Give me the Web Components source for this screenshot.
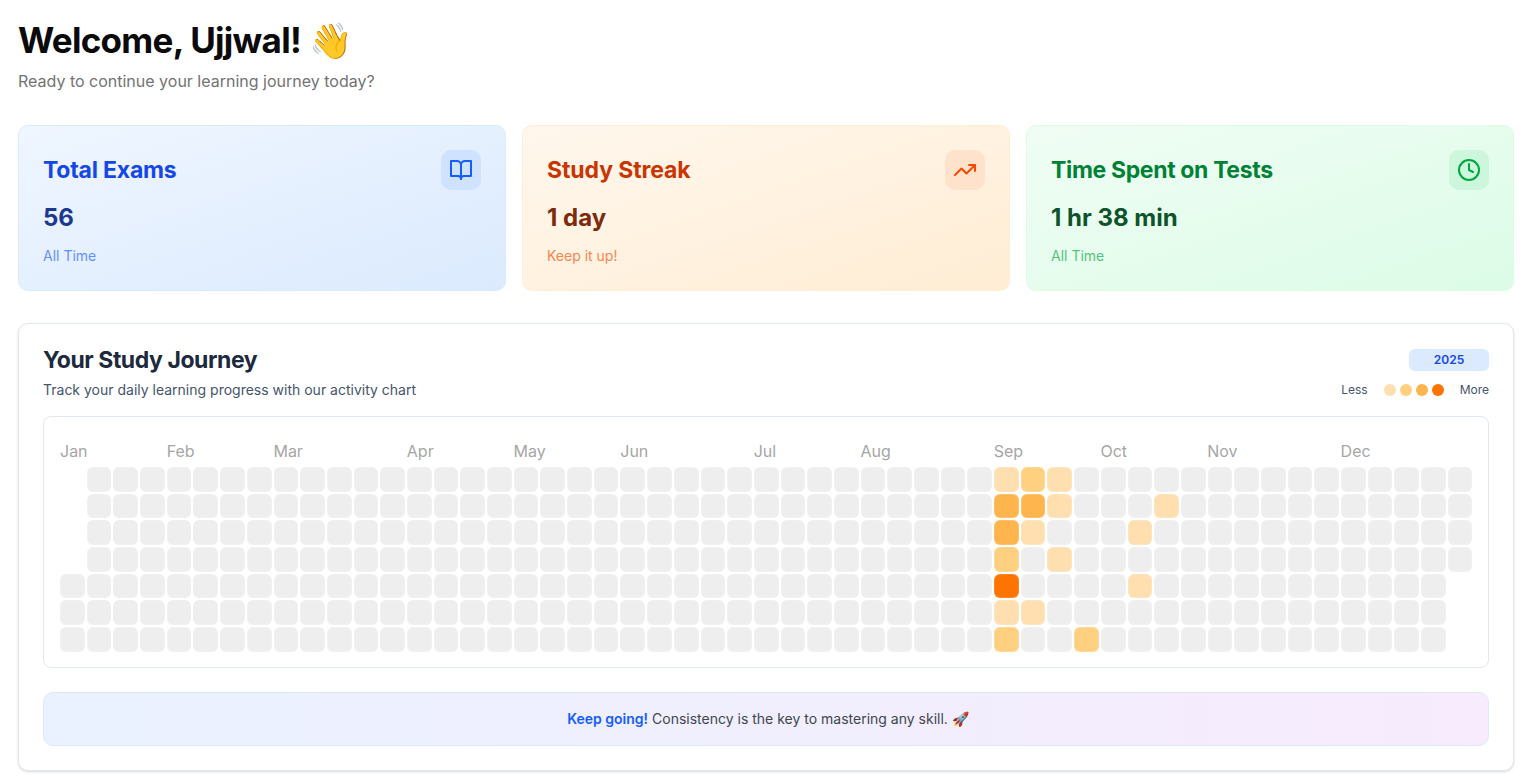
<!DOCTYPE html>
<html lang="en">
<head>
<meta charset="utf-8">
<title>Dashboard</title>
<style>
  html, body { margin: 0; background: #fff; }
  body { font-family: Inter, "Noto Sans", sans-serif; }
</style>
</head>
<body>
<dash-page>
  <welcome-header name="Ujjwal"></welcome-header>
  <stats-row>
    <stat-card tone="blue" label="Total Exams" value="56" note="All Time" icon="book" track="-0.2"></stat-card>
    <stat-card tone="orange" label="Study Streak" value="1 day" note="Keep it up!" icon="trend" track="-0.1"></stat-card>
    <stat-card tone="green" label="Time Spent on Tests" value="1 hr 38 min" note="All Time" icon="clock" track="-0.35"></stat-card>
  </stats-row>
  <journey-card year="2025">
    <activity-chart></activity-chart>
    <keep-going></keep-going>
  </journey-card>
</dash-page>

<script>
class DashPage extends HTMLElement {
  constructor() {
    super();
    this.attachShadow({ mode: "open" }).innerHTML = `
      <style>
        :host { display: block; padding: 20px 10px 12px 18px; }
      </style>
      <slot></slot>`;
  }
}

class WelcomeHeader extends HTMLElement {
  connectedCallback() {
    const name = this.getAttribute("name");
    this.attachShadow({ mode: "open" }).innerHTML = `
      <style>
        :host { display: block; margin-bottom: 32px; }
        h1 { margin: 0 0 9px; font-size: 35px; line-height: 40px; font-weight: 750; letter-spacing: -0.72px; color: #0a0a0a; }
        p { margin: 0; font-size: 16px; line-height: 24px; color: #737373; }
      </style>
      <h1>Welcome, ${name}! 👋</h1>
      <p>Ready to continue your learning journey today?</p>`;
  }
}

class StatsRow extends HTMLElement {
  constructor() {
    super();
    this.attachShadow({ mode: "open" }).innerHTML = `
      <style>
        :host { display: grid; grid-template-columns: repeat(3, 1fr); gap: 16px; margin-bottom: 32px; }
      </style>
      <slot></slot>`;
  }
}

const ICONS = {
  book: `<path d="M2 3h6a4 4 0 0 1 4 4v14a3 3 0 0 0-3-3H2z"/><path d="M22 3h-6a4 4 0 0 0-4 4v14a3 3 0 0 1 3-3h7z"/>`,
  trend: `<polyline points="22 7 13.5 15.5 8.5 10.5 2 17"/><polyline points="16 7 22 7 22 13"/>`,
  clock: `<circle cx="12" cy="12" r="10"/><polyline points="12 6 12 12 16 14"/>`,
};

const TONES = {
  blue: { from: "#eff6ff", to: "#dbeafe", border: "#dbeafe", title: "#1447e6", value: "#1c398e", chip: "#cfe2ff", icon: "#155dfc" },
  orange: { from: "#fff7ed", to: "#ffedd4", border: "#ffedd4", title: "#ca3500", value: "#7e2a0c", chip: "#ffe2cc", icon: "#f54900" },
  green: { from: "#f0fdf4", to: "#dcfce7", border: "#dcfce7", title: "#008236", value: "#0d542b", chip: "#ccf7dc", icon: "#00a63e" },
};

class StatCard extends HTMLElement {
  connectedCallback() {
    const t = TONES[this.getAttribute("tone")];
    this.attachShadow({ mode: "open" }).innerHTML = `
      <style>
        :host {
          display: block;
          padding: 24px;
          border: 1px solid ${t.border};
          border-radius: 10px;
          background: linear-gradient(to bottom right, ${t.from}, ${t.to});
        }
        .top { display: flex; justify-content: space-between; align-items: center; height: 40px; margin-bottom: 12px; }
        h3 { margin: 0; font-size: 23px; line-height: 28px; font-weight: 650; letter-spacing: ${this.getAttribute("track")}px; color: ${t.title}; }
        .chip { width: 40px; height: 40px; border-radius: 10px; background: ${t.chip}; display: flex; align-items: center; justify-content: center; }
        svg { width: 24px; height: 24px; fill: none; stroke: ${t.icon}; stroke-width: 2; stroke-linecap: round; stroke-linejoin: round; }
        .value { font-size: 24px; line-height: 32px; font-weight: 700; color: ${t.value}; margin-bottom: 12px; }
        .note { font-size: 14px; line-height: 20px; color: ${t.icon}; opacity: .65; }
      </style>
      <div class="top">
        <h3>${this.getAttribute("label")}</h3>
        <div class="chip"><svg viewBox="0 0 24 24">${ICONS[this.getAttribute("icon")]}</svg></div>
      </div>
      <div class="value">${this.getAttribute("value")}</div>
      <div class="note">${this.getAttribute("note")}</div>`;
  }
}

class JourneyCard extends HTMLElement {
  connectedCallback() {
    const dots = ["#ffdfb0", "#ffd080", "#ffb54d", "#ff7300"].map(c => `<i style="background:${c}"></i>`).join("");
    this.attachShadow({ mode: "open" }).innerHTML = `
      <style>
        :host {
          display: block;
          padding: 24px;
          border: 1px solid #e2e8f0;
          border-radius: 10px;
          background: #fff;
          box-shadow: 0 1px 3px rgba(0, 0, 0, .1), 0 1px 2px rgba(0, 0, 0, .06);
        }
        .head { display: flex; justify-content: space-between; align-items: flex-start; margin-bottom: 16px; }
        h2 { margin: 0 0 8px; font-size: 23px; line-height: 24px; font-weight: 650; letter-spacing: -0.45px; color: #1d293d; }
        p { margin: 0; font-size: 14px; line-height: 20px; color: #45556c; }
        .side { display: flex; flex-direction: column; align-items: flex-end; gap: 11px; padding-top: 1px; }
        .year { width: 80px; height: 22px; line-height: 22px; text-align: center; border-radius: 6px; background: #dbeafe; color: #1447e6; font-size: 12px; font-weight: 600; }
        .legend { display: flex; align-items: center; font-size: 12px; line-height: 16px; color: #45556c; }
        .dots { display: flex; gap: 4px; margin: 0 16px; }
        i { display: block; width: 12px; height: 12px; border-radius: 50%; }
      </style>
      <div class="head">
        <div>
          <h2>Your Study Journey</h2>
          <p>Track your daily learning progress with our activity chart</p>
        </div>
        <div class="side">
          <div class="year">${this.getAttribute("year")}</div>
          <div class="legend">Less<span class="dots">${dots}</span>More</div>
        </div>
      </div>
      <slot></slot>`;
  }
}

// col -> { row: level }, everything else is empty
const ACTIVITY = {
  35: { 0: 1, 1: 3, 2: 3, 3: 2, 4: 4, 5: 1, 6: 2 },
  36: { 0: 2, 1: 3, 2: 1, 5: 1 },
  37: { 0: 1, 1: 1, 3: 1 },
  38: { 6: 2 },
  40: { 2: 1, 4: 1 },
  41: { 1: 1 },
};
const MONTHS = [["Jan", 0], ["Feb", 4], ["Mar", 8], ["Apr", 13], ["May", 17], ["Jun", 21], ["Jul", 26], ["Aug", 30], ["Sep", 35], ["Oct", 39], ["Nov", 43], ["Dec", 48]];

class ActivityChart extends HTMLElement {
  connectedCallback() {
    let cells = "";
    for (let col = 0; col < 53; col++) {
      for (let row = 0; row < 7; row++) {
        if (col === 0 && row < 4) continue;
        if (col === 52 && row > 3) continue;
        const lvl = (ACTIVITY[col] && ACTIVITY[col][row]) || 0;
        cells += `<b class="l${lvl}" style="grid-column:${col + 1};grid-row:${row + 1}"></b>`;
      }
    }
    const labels = MONTHS.map(([m, c]) => `<span style="grid-column:${c + 1} / span 3">${m}</span>`).join("");
    this.attachShadow({ mode: "open" }).innerHTML = `
      <style>
        :host { display: block; padding: 16px 16px 15px; border: 1px solid #e2e8f0; border-radius: 8px; background: #fff; margin-bottom: 24px; }
        .months, .grid { display: grid; grid-template-columns: repeat(53, 1fr); column-gap: 2px; }
        .months { font-size: 16px; line-height: 24px; color: #a6a6a6; padding-top: 6px; margin-bottom: 4px; }
        .grid { row-gap: 2px; }
        b { display: block; aspect-ratio: 1; border-radius: 6px; box-shadow: inset 0 0 0 1px rgba(255, 255, 255, .15); }
        .l0 { background: #eee; }
        .l1 { background: #ffdfb0; }
        .l2 { background: #ffd080; }
        .l3 { background: #ffb54d; }
        .l4 { background: #ff7300; }
      </style>
      <div class="months">${labels}</div>
      <div class="grid">${cells}</div>`;
  }
}

class KeepGoing extends HTMLElement {
  constructor() {
    super();
    this.attachShadow({ mode: "open" }).innerHTML = `
      <style>
        :host {
          display: block;
          padding: 16px 16px 16px 20px;
          border: 1px solid #dbeafe;
          border-radius: 10px;
          background: linear-gradient(90deg, #eaf2ff, #f7ebfd);
          text-align: center;
          font-size: 14px;
          line-height: 20px;
          color: #3f4650;
        }
        strong { font-weight: 600; color: #155dfc; }
      </style>
      <strong>Keep going!</strong> Consistency is the key to mastering any skill. 🚀`;
  }
}

customElements.define("dash-page", DashPage);
customElements.define("welcome-header", WelcomeHeader);
customElements.define("stats-row", StatsRow);
customElements.define("stat-card", StatCard);
customElements.define("journey-card", JourneyCard);
customElements.define("activity-chart", ActivityChart);
customElements.define("keep-going", KeepGoing);
</script>
</body>
</html>
